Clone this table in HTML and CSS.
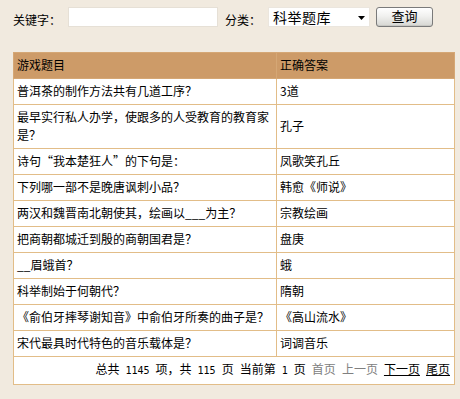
FILE: index.html
```html
<!DOCTYPE html>
<html lang="zh-CN">
<head>
<meta charset="utf-8">
<title>题库查询</title>
<link rel="stylesheet" href="styles.css">
</head>
<body>
<form class="search">
  <label class="label">关键字：</label>
  <span class="input"></span>
  <label class="label">分类：</label>
  <span class="select"><span class="select-text">科举题库</span><svg class="arrow" width="7" height="4" viewBox="0 0 7 4"><polygon points="0,0 7,0 3.5,4" fill="#000"/></svg></span>
  <span class="button">查询</span>
</form>
<table class="grid">
  <colgroup><col class="c1"><col class="c2"></colgroup>
  <thead>
    <tr><th>游戏题目</th><th>正确答案</th></tr>
  </thead>
  <tbody>
    <tr><td class="q">普洱茶的制作方法共有几道工序？</td><td>3道</td></tr>
    <tr><td class="q">最早实行私人办学，使跟多的人受教育的教育家是？</td><td>孔子</td></tr>
    <tr><td class="q">诗句“我本楚狂人”的下句是：</td><td>凤歌笑孔丘</td></tr>
    <tr><td class="q">下列哪一部不是晚唐讽刺小品？</td><td>韩愈《师说》</td></tr>
    <tr><td class="q">两汉和魏晋南北朝使其，绘画以<span class="blank">___</span>为主？</td><td>宗教绘画</td></tr>
    <tr><td class="q">把商朝都城迁到殷的商朝国君是？</td><td>盘庚</td></tr>
    <tr><td class="q"><span class="blank">__</span>眉蛾首？</td><td>蛾</td></tr>
    <tr><td class="q">科举制始于何朝代？</td><td>隋朝</td></tr>
    <tr><td class="q">《俞伯牙摔琴谢知音》中俞伯牙所奏的曲子是？</td><td>《高山流水》</td></tr>
    <tr><td class="q">宋代最具时代特色的音乐载体是？</td><td>词调音乐</td></tr>
    <tr><td class="pager" colspan="2">总共<span class="num"> 1145 </span>项，共<span class="num"> 115 </span>页<span class="num"> </span>当前第<span class="num"> 1 </span>页<span class="num"> </span><span class="off">首页</span><span class="num"> </span><span class="off">上一页</span><span class="num"> </span><a class="link" href="#">下一页</a><span class="num"> </span><a class="link" href="#">尾页</a></td></tr>
  </tbody>
</table>
</body>
</html>
```
FILE: styles.css
```css
html, body {
  margin: 0;
  padding: 0;
}
body {
  background: #f1eadf;
  font-family: "Noto Sans CJK SC", sans-serif;
  font-size: 12px;
  color: #000;
  padding: 7px 7px 0 13px;
  text-spacing-trim: space-all;
}
.search {
  display: flex;
  align-items: flex-end;
  height: 20px;
  margin: 0 0 25px 0;
}
.label {
  line-height: 12px;
  margin-bottom: 1px;
  margin-right: 7px;
  font-variant-east-asian: full-width;
}
.input {
  width: 148px;
  height: 18px;
  background: #fff;
  border: 1px solid #e6e0d6;
  margin-right: 7px;
}
.select {
  height: 18px;
  background: #fff;
  border: 1px solid #ebe6de;
  display: flex;
  align-items: center;
  justify-content: space-between;
  padding: 0 4px 0 4px;
  width: 92px;
  margin-right: 6px;
}
.select-text {
  font-size: 14px;
  line-height: 16px;
  letter-spacing: 0.5px;
}
.arrow {
  display: block;
  margin-top: 2px;
}
.button {
  width: 55px;
  height: 18px;
  border: 1px solid #7a7a7a;
  border-radius: 3px;
  background: linear-gradient(#ffffff, #f1f1ef 45%, #d6d6d2);
  box-shadow: inset 0 -1px 0 #c8c8c4;
  text-align: center;
  font-size: 13px;
  line-height: 16px;
}
.grid {
  border-collapse: collapse;
  table-layout: fixed;
  width: 441px;
  background: #fff;
}
.c1 { width: 263px; }
.c2 { width: 178px; }
.grid th,
.grid td {
  border: 1px solid #e2bd88;
  padding: 3px 3px 4px 3px;
  line-height: 18px;
  font-weight: normal;
  text-align: left;
  vertical-align: middle;
}
.grid th {
  background: #cd9b68;
  border-color: #d5a775;
}
.q {
  font-variant-east-asian: full-width;
}
.blank {
  font-variant-east-asian: normal;
}
.pager {
  text-align: right !important;
  padding-right: 4px !important;
  font-variant-east-asian: full-width;
}
.num {
  font-family: "DejaVu Sans Mono", monospace;
  font-size: 10px;
  font-variant-east-asian: normal;
}
.off {
  color: #808080;
}
.link {
  color: #000;
  text-decoration: underline;
}
```
